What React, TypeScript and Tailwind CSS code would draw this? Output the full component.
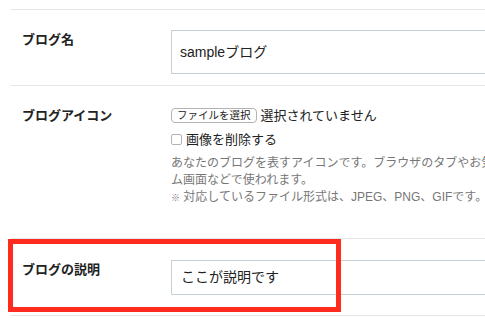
const font = '[font-family:"Liberation_Sans","Noto_Sans_CJK_JP",sans-serif]';

export default function App() {
  return (
    <div className={`h-[323px] w-[485px] overflow-hidden bg-white text-[#222] ${font}`}>
      <div className="ml-[11px] w-[640px] pt-[9px]">
        {/* ブログ名 */}
        <div className="flex border-t border-[#e4e7ea] pb-[11px] pt-[20px]">
          <div className="w-[160px] pl-[11px] text-[13px] font-bold leading-[20px]">ブログ名</div>
          <div className="flex h-[44px] w-[420px] items-center border border-[#c6d1d7] px-[8px] text-[14px]">
            sampleブログ
          </div>
        </div>

        {/* ブログアイコン */}
        <div className="flex border-t border-[#e4e7ea] pb-[31px] pt-[22px]">
          <div className="w-[160px] pl-[11px] text-[13px] font-bold leading-[15px]">ブログアイコン</div>
          <div className="w-[330px]">
            <div className="flex items-center gap-[4px]">
              <span className="flex h-[15px] items-center rounded-[4px] border border-[#b3b3b3] bg-white px-[5px] text-[10.5px] leading-none">
                ファイルを選択
              </span>
              <span className="text-[13px] leading-[15px]">選択されていません</span>
            </div>
            <div className="mt-[9px] flex items-center gap-[4px]">
              <span className="h-[11px] w-[11px] rounded-[2px] border border-[#b3b3b3] bg-white" />
              <span className="text-[13px] leading-[15px]">画像を削除する</span>
            </div>
            <div className="mt-[8px] whitespace-nowrap text-[12px] leading-[17px] text-[#777]">
              <p>あなたのブログを表すアイコンです。ブラウザのタブやお気に入り、ホー</p>
              <p>ム画面などで使われます。</p>
              <p>
                <span className="text-[9px]">※</span> 対応しているファイル形式は、JPEG、PNG、GIFです。
              </p>
            </div>
          </div>
        </div>

        {/* ブログの説明 */}
        <div className="relative flex border-y border-[#e4e7ea] pb-[20px] pt-[21px]">
          <div className="w-[160px] pl-[11px] text-[13px] font-bold leading-[20px]">ブログの説明</div>
          <div className="flex h-[35px] w-[420px] items-center border border-[#c6d1d7] px-[9px] text-[14px]">
            ここが説明です
          </div>
          <div className="absolute left-[-3px] top-[0px] h-[73px] w-[333px] border-[5px] border-[#ff2b1f]" />
        </div>
      </div>
    </div>
  );
}
